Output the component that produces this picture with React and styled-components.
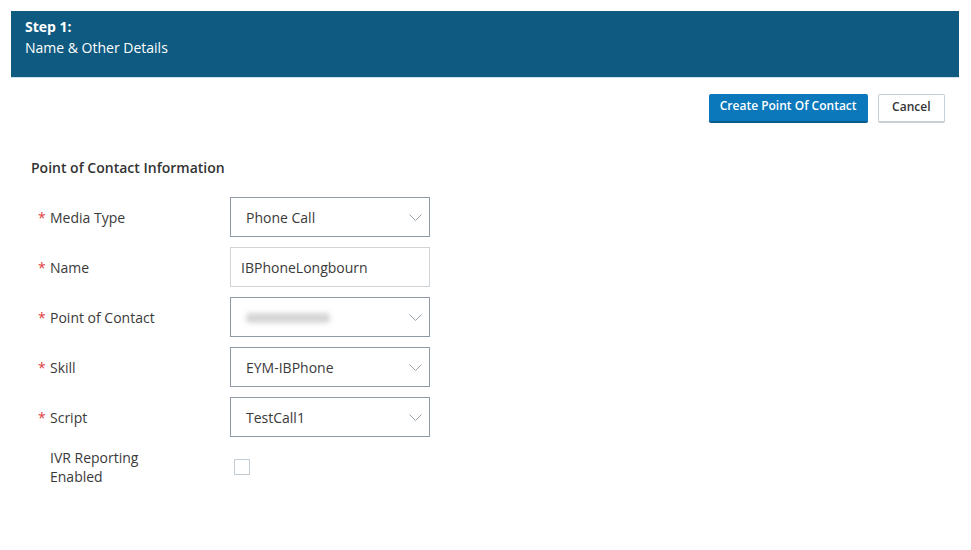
import React from "react";
import styled, { createGlobalStyle } from "styled-components";

const Global = createGlobalStyle`
  html, body { margin: 0; padding: 0; background: #fff; }
  body { font-family: "Open Sans", "Noto Sans", sans-serif; color: #333; }
`;

const Page = styled.div`
  padding: 11px 12px 0 11px;
  width: 971px;
  box-sizing: border-box;
`;

const Header = styled.div`
  background: #0e5a80;
  height: 67px;
  box-sizing: border-box;
  padding: 7px 14px;
  color: #fff;
  border-bottom: 1px solid #cfe3ef;
`;

const StepTitle = styled.div`
  font-size: 14px;
  font-weight: 700;
  line-height: 18px;
`;

const StepSub = styled.div`
  font-size: 14px;
  line-height: 24px;
`;

const Actions = styled.div`
  display: flex;
  justify-content: flex-end;
  gap: 10px;
  padding: 16px 14px 0 0;
`;

const Button = styled.button`
  height: 29px;
  font-family: "Open Sans", sans-serif;
  font-size: 12px;
  font-weight: 600;
  line-height: 16px;
  border-radius: 2px;
  padding: 0 ${(p) => (p.$primary ? "11px" : "13.5px")} 3px;
  cursor: pointer;
  box-sizing: border-box;
  ${(p) =>
    p.$primary
      ? `background:#0a78ba;color:#fff;border:none;border-bottom:2px solid #0a5a8c;`
      : `background:#fff;color:#333;border:1px solid #c6ced6;border-bottom:2px solid #c6ced6;`}
`;

const Form = styled.div`
  padding: 35px 0 0 20px;
`;

const SectionTitle = styled.div`
  font-size: 14px;
  font-weight: 600;
  color: #333;
  line-height: 20px;
  margin-bottom: 19px;
`;

const Rows = styled.div`
  display: flex;
  flex-direction: column;
  gap: 10px;
`;

const Row = styled.div`
  display: flex;
  align-items: center;
  min-height: 40px;
`;

const Label = styled.div`
  padding: 0 0 0 7px;
  box-sizing: border-box;
  width: 199px;
  font-size: 14px;
  line-height: 19px;
  color: #3a3a3a;
  display: flex;
`;

const Star = styled.span`
  color: #e23b3b;
  width: 12px;
  flex: none;
`;

const LabelText = styled.span`
  padding-left: ${(p) => (p.$indent ? "12px" : "0")};
  width: 110px;
`;

const Field = styled.div`
  width: 200px;
  height: 40px;
  box-sizing: border-box;
  border: 1px solid ${(p) => (p.$light ? "#cfd4d8" : "#8e9ba6")};
  display: flex;
  align-items: center;
  padding: 0 7px 0 ${(p) => (p.$light ? "10px" : "15px")};
  font-size: 14px;
  color: #3a3a3a;
`;

const Value = styled.span`
  flex: 1;
`;

const Blur = styled.span`
  display: inline-block;
  width: 84px;
  height: 10px;
  background: #d6d6d6;
  border-radius: 4px;
  filter: blur(2.5px);
`;

const Checkbox = styled.span`
  display: inline-block;
  width: 16px;
  height: 16px;
  box-sizing: border-box;
  border: 1px solid #c4ccd3;
  margin-left: 4px;
`;

const Chevron = () => (
  <svg width="13" height="7" viewBox="0 0 13 7" fill="none">
    <path d="M0.5 0.5l6 6 6-6" stroke="#97a4ae" strokeWidth="1" />
  </svg>
);

const fields = [
  { label: "Media Type", value: "Phone Call", select: true },
  { label: "Name", value: "IBPhoneLongbourn", select: false },
  { label: "Point of Contact", blur: true, select: true },
  { label: "Skill", value: "EYM-IBPhone", select: true },
  { label: "Script", value: "TestCall1", select: true },
];

export default function App() {
  return (
    <>
      <Global />
      <Page>
        <Header>
          <StepTitle>Step 1:</StepTitle>
          <StepSub>Name &amp; Other Details</StepSub>
        </Header>
        <Actions>
          <Button $primary>Create Point Of Contact</Button>
          <Button>Cancel</Button>
        </Actions>
        <Form>
          <SectionTitle>Point of Contact Information</SectionTitle>
          <Rows>
            {fields.map((f) => (
              <Row key={f.label}>
                <Label>
                  <Star>*</Star>
                  <LabelText>{f.label}</LabelText>
                </Label>
                <Field $light={!f.select}>
                  <Value>{f.blur ? <Blur /> : f.value}</Value>
                  {f.select && <Chevron />}
                </Field>
              </Row>
            ))}
            <Row>
              <Label>
                <LabelText $indent>IVR Reporting Enabled</LabelText>
              </Label>
              <Checkbox />
            </Row>
          </Rows>
        </Form>
      </Page>
    </>
  );
}
